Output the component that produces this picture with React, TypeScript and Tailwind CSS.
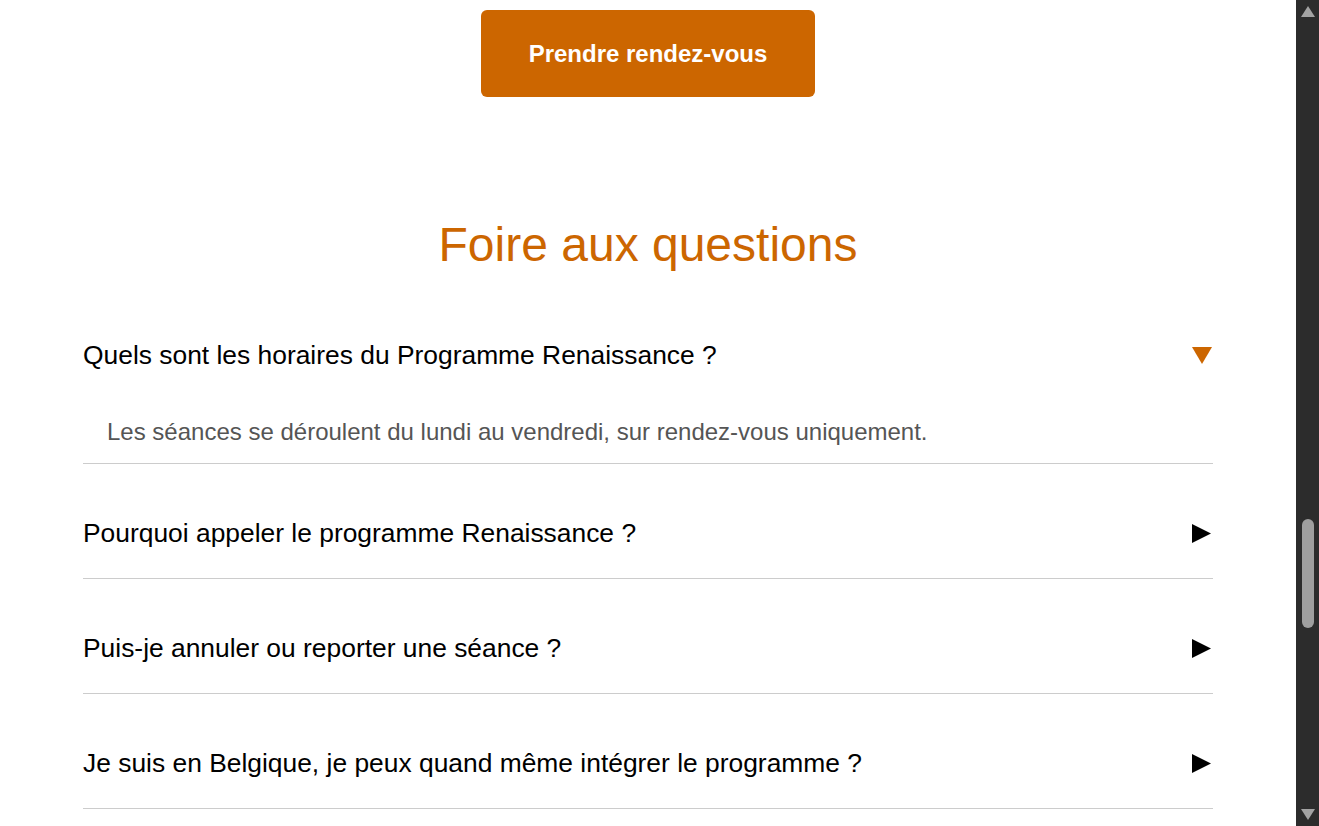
import React, { useState } from 'react';

type Faq = { q: string; a: string };

const faqs: Faq[] = [
  {
    q: 'Quels sont les horaires du Programme Renaissance ?',
    a: 'Les séances se déroulent du lundi au vendredi, sur rendez-vous uniquement.',
  },
  { q: 'Pourquoi appeler le programme Renaissance ?', a: '' },
  { q: 'Puis-je annuler ou reporter une séance ?', a: '' },
  { q: 'Je suis en Belgique, je peux quand même intégrer le programme ?', a: '' },
];

function Arrow({ open }: { open: boolean }) {
  return (
    <span className="w-[21px] flex items-center justify-start shrink-0">
      {open ? (
        <svg width="20" height="17" viewBox="0 0 20 17">
          <path d="M0 0H20L10 17Z" fill="#cc6600" />
        </svg>
      ) : (
        <svg width="19" height="19" viewBox="0 0 19 19">
          <path d="M0 0L19 9.5L0 19Z" fill="#000" />
        </svg>
      )}
    </span>
  );
}

function FaqItem({ item, open, onToggle }: { item: Faq; open: boolean; onToggle: () => void }) {
  return (
    <div className="border-b border-[#cccccc]">
      <button
        onClick={onToggle}
        className="w-full flex items-center justify-between pt-[54px] pb-[30px] text-left cursor-pointer"
      >
        <span className="text-[26.4px] leading-[30px] text-black">{item.q}</span>
        <Arrow open={open} />
      </button>
      {open && (
        <p className="mt-[18px] pb-[17px] pl-[24px] text-[24px] leading-[28px] text-[#555555]">{item.a}</p>
      )}
    </div>
  );
}

function Scrollbar() {
  return (
    <div className="w-[23px] h-[826px] bg-[#2c2c2c] flex flex-col items-center justify-between py-[6px] shrink-0">
      <svg width="14" height="11" viewBox="0 0 14 11">
        <path d="M7 0L14 11H0Z" fill="#a3a3a3" />
      </svg>
      <div className="flex-1 w-full flex flex-col items-center pt-[502px]">
        <div className="w-[12px] h-[109px] rounded-full bg-[#9f9f9f]" />
      </div>
      <svg width="14" height="11" viewBox="0 0 14 11">
        <path d="M0 0H14L7 11Z" fill="#a3a3a3" />
      </svg>
    </div>
  );
}

export default function App() {
  const [openIndex, setOpenIndex] = useState<number | null>(0);

  return (
    <div className="flex w-[1319px] h-[826px] overflow-hidden bg-white font-['Liberation_Sans',Arial,sans-serif]">
      <main className="flex-1 flex flex-col items-center pt-[10px]">
        <button className="w-[334px] h-[87px] rounded-[6px] bg-[#cc6600] text-white text-[24px] font-bold">
          Prendre rendez-vous
        </button>

        <section className="w-[1130px] mt-[120px]">
          <h2 className="text-center text-[#cc6600] text-[48px] leading-[56px] mb-[13px]">Foire aux questions</h2>
          <div className="flex flex-col">
            {faqs.map((item, i) => (
              <FaqItem
                key={item.q}
                item={item}
                open={openIndex === i}
                onToggle={() => setOpenIndex(openIndex === i ? null : i)}
              />
            ))}
          </div>
        </section>
      </main>
      <Scrollbar />
    </div>
  );
}
